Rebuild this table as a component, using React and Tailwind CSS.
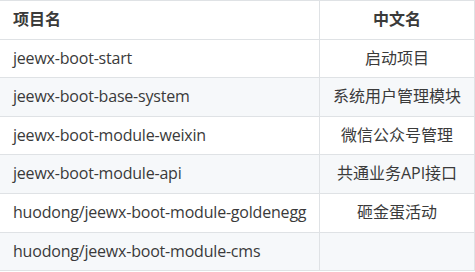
const rows = [
  ["jeewx-boot-start", "启动项目"],
  ["jeewx-boot-base-system", "系统用户管理模块"],
  ["jeewx-boot-module-weixin", "微信公众号管理"],
  ["jeewx-boot-module-api", "共通业务API接口"],
  ["huodong/jeewx-boot-module-goldenegg", "砸金蛋活动"],
  ["huodong/jeewx-boot-module-cms", ""],
];

export default function App() {
  return (
    <div
      className="w-[475px] h-[272px] bg-white text-[16px] text-[#3a3a3a]"
      style={{ fontFamily: '"Open Sans", "Noto Sans CJK SC", sans-serif' }}
    >
      <div className="border-t border-[#dfe2e5]">
        <div className="flex border-b border-[#dfe2e5] bg-white font-bold">
          <div className="w-[320px] border-r border-[#dfe2e5] px-[13px] py-[6px] leading-[25.6px]">
            项目名
          </div>
          <div className="flex-1 border-r border-[#dfe2e5] px-[13px] py-[6px] leading-[25.6px] text-center">
            中文名
          </div>
        </div>
        {rows.map(([a, b], i) => (
          <div
            key={a}
            className={
              "flex border-b border-[#dfe2e5] " + (i % 2 === 1 ? "bg-[#f6f8fa]" : "bg-white")
            }
          >
            <div className="w-[320px] border-r border-[#dfe2e5] px-[13px] py-[6px] leading-[25.6px] whitespace-nowrap tracking-[-0.2px]">
              {a}
            </div>
            <div className="flex-1 border-r border-[#dfe2e5] px-[13px] py-[6px] leading-[25.6px] text-center whitespace-nowrap">
              {b}
            </div>
          </div>
        ))}
      </div>
    </div>
  );
}
